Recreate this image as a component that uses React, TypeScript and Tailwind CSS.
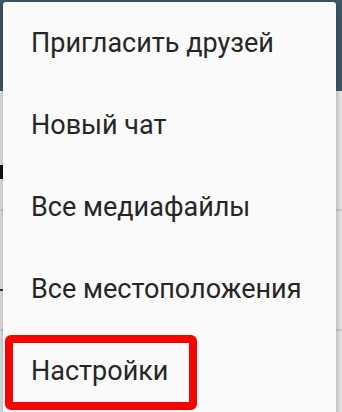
import React from 'react';

const items = ['Пригласить друзей', 'Новый чат', 'Все медиафайлы', 'Все местоположения', 'Настройки'];

export default function App() {
  return (
    <div className="relative w-[342px] h-[412px] overflow-hidden bg-[#e4e4e4]" style={{ fontFamily: 'Roboto, "Noto Sans", sans-serif' }}>
      {/* app behind the menu */}
      <div className="h-[91px] bg-[#3d5866]" />
      <div className="h-[120px] border-b-2 border-[#cdcdcd] relative">
        {/* sliver of a letter peeking out at the left edge */}
        <span className="absolute left-0 top-[74px] w-[3px] h-[14px] bg-[#111]" />
      </div>
      <div className="h-[120px] border-b-2 border-[#cdcdcd] relative">
        <span className="absolute left-0 top-[78px] w-[3px] h-[2px] bg-[#333]" />
      </div>

      {/* overflow menu */}
      <div className="absolute left-[3px] top-[2px] w-[333px] h-[430px] bg-[#fafafa] rounded-[3px] shadow-[0_2px_6px_rgba(0,0,0,0.3)]">
        {items.map((label) => (
          <div key={label} className="h-[82px] flex items-center pl-[28px] text-[27px] text-[#262626]">
            {label}
          </div>
        ))}
      </div>

      {/* highlight */}
      <div className="absolute left-[5px] top-[335px] w-[192px] h-[75px] border-8 border-[#ff0000] rounded-[6px]" />
    </div>
  );
}
